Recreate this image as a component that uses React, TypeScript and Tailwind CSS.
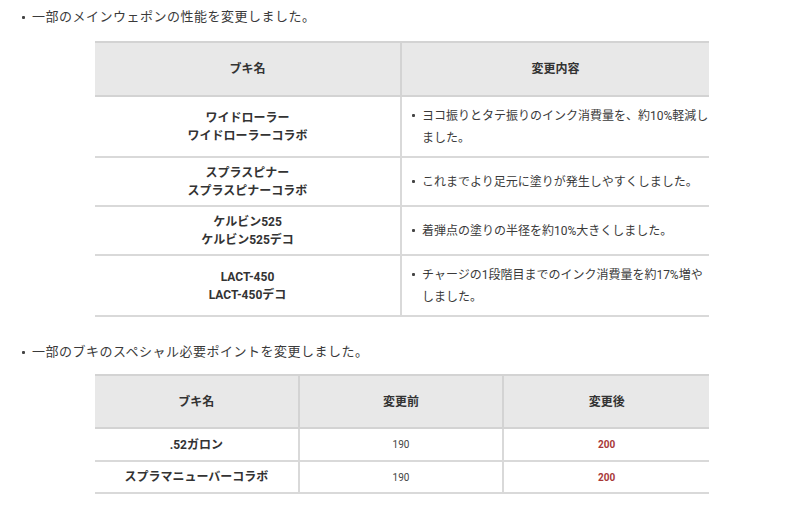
import React from "react";

const font = { fontFamily: 'Roboto, "Noto Sans CJK JP", "Noto Sans", sans-serif' };

function Dot() {
  return <span className="inline-block w-[3px] h-[3px] bg-[#444] rounded-[1px] shrink-0" />;
}

function Bullet({ children }: { children: React.ReactNode }) {
  return (
    <div className="flex items-center h-[20px] pl-[22px] text-[13px] tracking-[0.5px] text-[#3a3a3a]">
      <Dot />
      <span className="ml-[7px]">{children}</span>
    </div>
  );
}

const rows1: { name: string[]; desc: string[]; h: string }[] = [
  { name: ["ワイドローラー", "ワイドローラーコラボ"], desc: ["ヨコ振りとタテ振りのインク消費量を、約10%軽減し", "ました。"], h: "h-[61px]" },
  { name: ["スプラスピナー", "スプラスピナーコラボ"], desc: ["これまでより足元に塗りが発生しやすくしました。"], h: "h-[49px]" },
  { name: ["ケルビン525", "ケルビン525デコ"], desc: ["着弾点の塗りの半径を約10%大きくしました。"], h: "h-[49px]" },
  { name: ["LACT-450", "LACT-450デコ"], desc: ["チャージの1段階目までのインク消費量を約17%増や", "しました。"], h: "h-[61px]" },
];

const rows2 = [
  { name: ".52ガロン", before: "190", after: "200", h: "h-[33px]" },
  { name: "スプラマニューバーコラボ", before: "190", after: "200", h: "h-[32px]" },
];

export default function App() {
  return (
    <div className="w-[800px] h-[511px] bg-white pt-[7px] text-[#333]" style={font}>
      <Bullet>一部のメインウェポンの性能を変更しました。</Bullet>

      <div className="ml-[95px] w-[614px] mt-[14px] text-[12px]">
        <div className="grid grid-cols-2 h-[56px] bg-[#e8e8e8] border-y-2 border-[#d3d3d3] font-bold">
          <div className="flex items-center justify-center border-r-2 border-[#d3d3d3]">ブキ名</div>
          <div className="flex items-center justify-center">変更内容</div>
        </div>
        {rows1.map((r, i) => (
          <div key={i} className={`grid grid-cols-2 ${r.h} border-b-2 border-[#d9d9d9]`}>
            <div className="flex flex-col items-center justify-center border-r-2 border-[#d9d9d9] font-bold leading-[18px]">
              {r.name.map((n, j) => (
                <div key={j}>{n}</div>
              ))}
            </div>
            <div className="flex items-center pl-[10px]">
              <div className="flex items-start leading-[22px] text-[#3a3a3a]">
                <span className="h-[22px] flex items-center">
                  <Dot />
                </span>
                <div className="ml-[7px] whitespace-nowrap">
                  {r.desc.map((d, j) => (
                    <div key={j}>{d}</div>
                  ))}
                </div>
              </div>
            </div>
          </div>
        ))}
      </div>

      <div className="mt-[25px]">
        <Bullet>一部のブキのスペシャル必要ポイントを変更しました。</Bullet>
      </div>

      <div className="ml-[95px] w-[614px] mt-[12px] text-[12px]">
        <div className="grid grid-cols-3 h-[55px] bg-[#e8e8e8] border-y-2 border-[#d3d3d3] font-bold">
          <div className="flex items-center justify-center border-r-2 border-[#d3d3d3]">ブキ名</div>
          <div className="flex items-center justify-center border-r-2 border-[#d3d3d3]">変更前</div>
          <div className="flex items-center justify-center">変更後</div>
        </div>
        {rows2.map((r, i) => (
          <div key={i} className={`grid grid-cols-3 ${r.h} border-b-2 border-[#d9d9d9]`}>
            <div className="flex items-center justify-center border-r-2 border-[#d9d9d9] font-bold">{r.name}</div>
            <div className="flex items-center justify-center border-r-2 border-[#d9d9d9] text-[10px] text-[#444]">{r.before}</div>
            <div className="flex items-center justify-center text-[10px] font-bold text-[#a83838]">{r.after}</div>
          </div>
        ))}
      </div>
    </div>
  );
}
